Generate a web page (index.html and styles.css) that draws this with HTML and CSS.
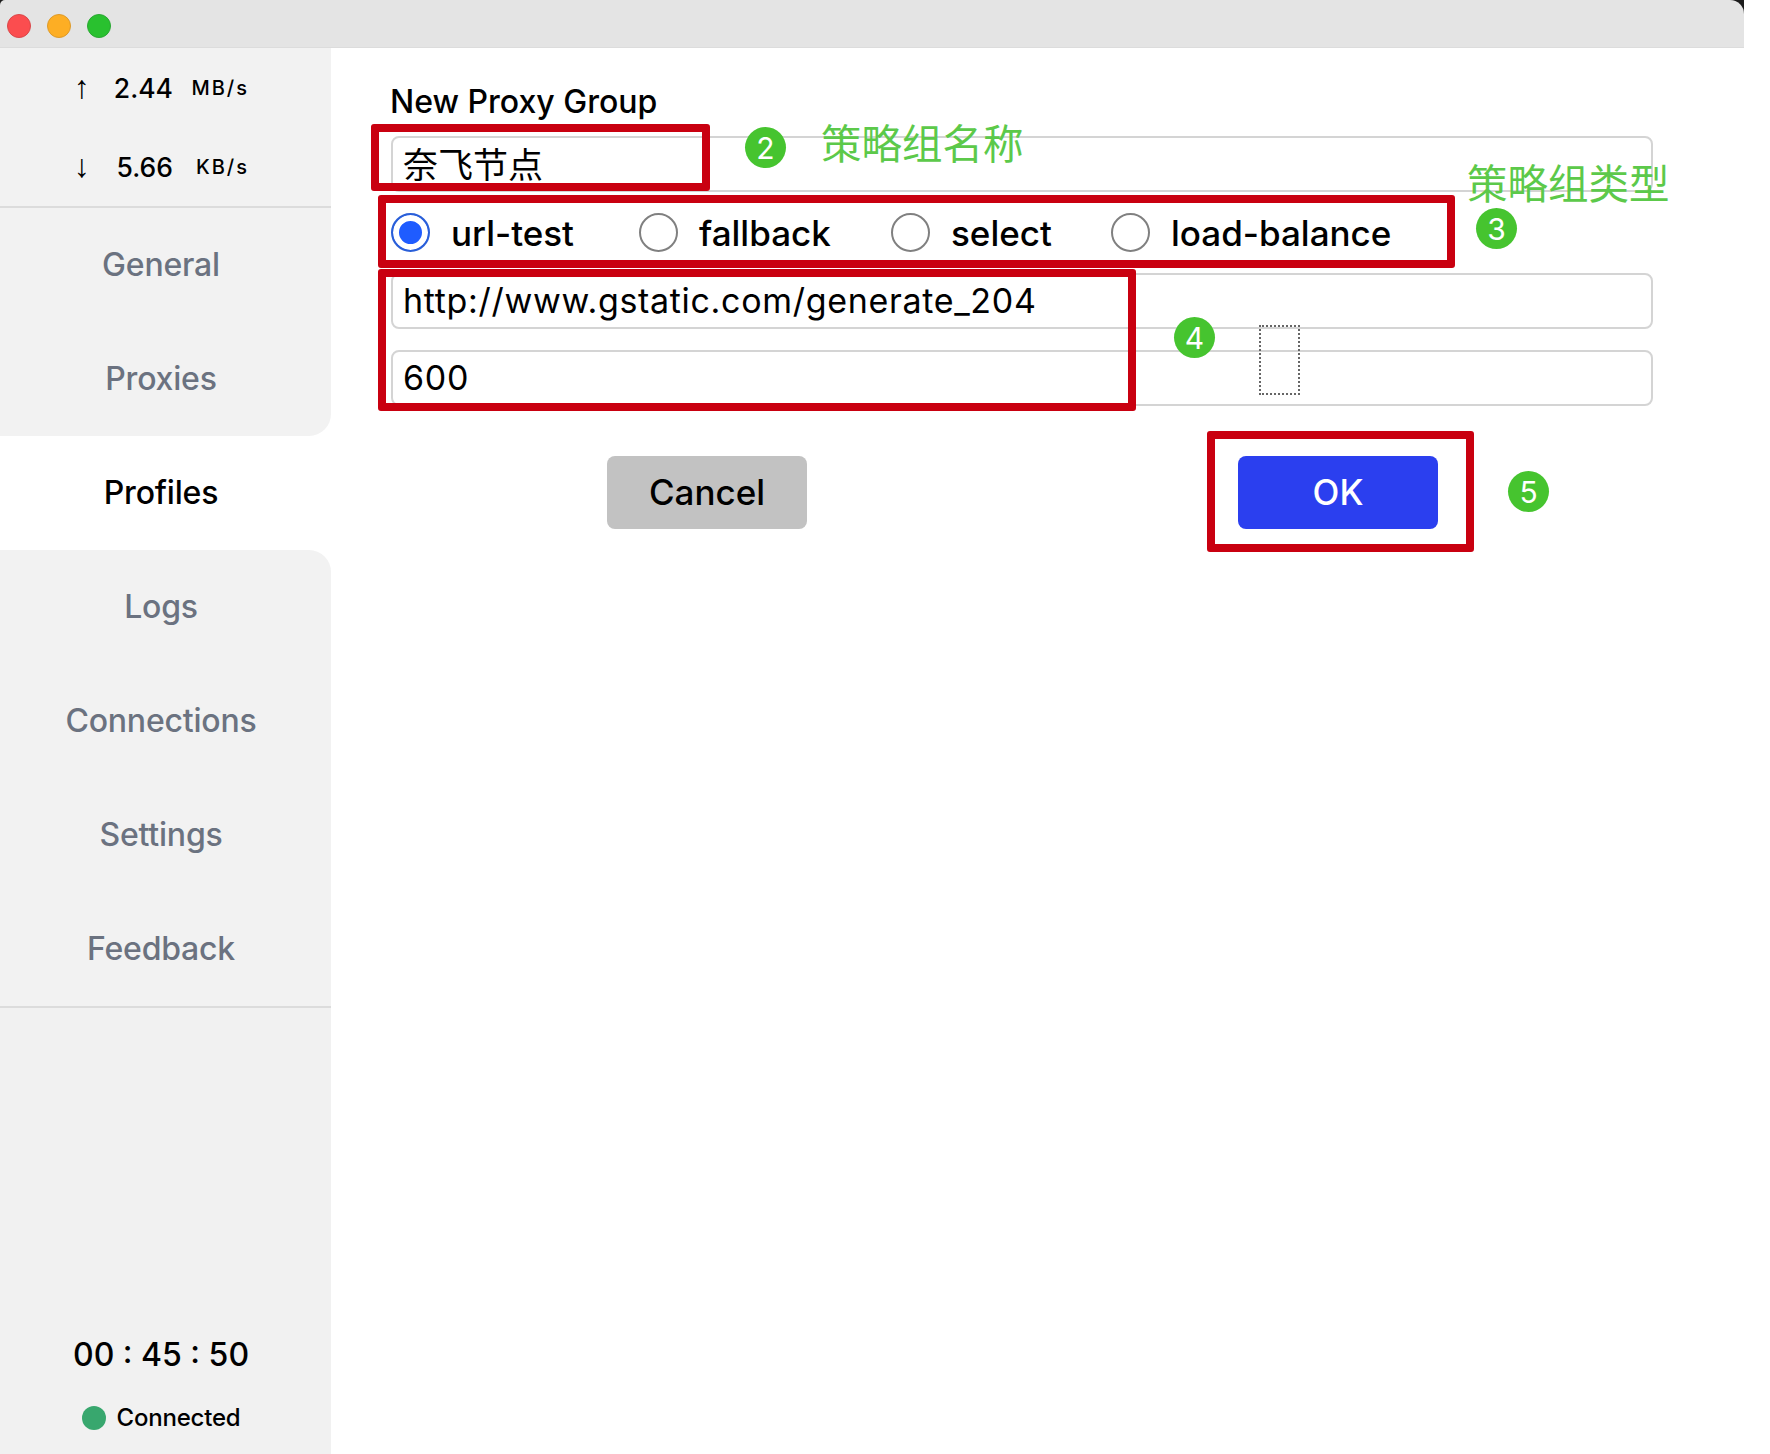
FILE: index.html
```html
<!DOCTYPE html>
<html lang="en">
<head>
<meta charset="utf-8">
<title>New Proxy Group</title>
<link rel="stylesheet" href="styles.css">
</head>
<body>
<div class="window">
  <div class="titlebar-frame">
    <header class="titlebar">
      <span class="light light-red"></span>
      <span class="light light-yellow"></span>
      <span class="light light-green"></span>
    </header>
  </div>
  <div class="content">
    <aside class="sidebar">
      <div class="traffic">
        <div class="speed"><span class="arrow">↑</span><span class="value">2.44</span><span class="unit">MB/s</span></div>
        <div class="speed"><span class="arrow">↓</span><span class="value">5.66</span><span class="unit">KB/s</span></div>
      </div>
      <nav class="nav">
        <div class="nav-item">General</div>
        <div class="nav-item before-active">Proxies</div>
        <div class="nav-item active">Profiles</div>
        <div class="nav-item after-active">Logs</div>
        <div class="nav-item">Connections</div>
        <div class="nav-item">Settings</div>
        <div class="nav-item">Feedback</div>
      </nav>
      <div class="status">
        <div class="timer">00 : 45 : 50</div>
        <div class="connected"><span class="dot"></span>Connected</div>
      </div>
    </aside>
    <main class="main">
      <h1 class="form-title">New Proxy Group</h1>
      <div class="field field-name">奈飞节点</div>
      <div class="radios">
        <label class="radio radio-1"><span class="circle checked"></span>url-test</label>
        <label class="radio radio-2"><span class="circle"></span>fallback</label>
        <label class="radio radio-3"><span class="circle"></span>select</label>
        <label class="radio"><span class="circle"></span>load-balance</label>
      </div>
      <div class="field field-url">http://www.gstatic.com/generate_204</div>
      <div class="field field-interval">600</div>
      <div class="buttons">
        <button class="btn btn-cancel">Cancel</button>
        <button class="btn btn-ok">OK</button>
      </div>
    </main>
  </div>
</div>

<div class="mark mark-name"></div>
<div class="mark mark-type"></div>
<div class="mark mark-url"></div>
<div class="mark mark-ok"></div>
<div class="badge badge-2">2</div>
<div class="badge badge-3">3</div>
<div class="badge badge-4">4</div>
<div class="badge badge-5">5</div>
<div class="note note-name">策略组名称</div>
<div class="note note-type">策略组类型</div>
<div class="dotted"></div>
</body>
</html>
```

FILE: styles.css
```css
* { box-sizing: border-box; }

html, body {
  margin: 0;
  height: 100%;
  background: #fff;
}

body {
  position: relative;
  width: 1770px;
  height: 1454px;
  overflow: hidden;
  font-family: Inter, "Noto Sans CJK SC", sans-serif;
  color: #000;
}

.window {
  display: flex;
  flex-direction: column;
  height: 1454px;
}

.titlebar-frame {
  width: 1744px;
  height: 48px;
  background: #1c1c1c;
}

.titlebar {
  display: flex;
  align-items: center;
  gap: 16px;
  height: 48px;
  padding: 4px 0 0 7px;
  background: #e4e4e4;
  border-bottom: 1px solid #dcdcdc;
  border-top-left-radius: 5px;
  border-top-right-radius: 14px;
}

.light {
  width: 24px;
  height: 24px;
  border-radius: 50%;
  border: 1px solid;
}
.light-red { background: #fb4d4f; border-color: #d9484a; }
.light-yellow { background: #fdae24; border-color: #dd9a2a; }
.light-green { background: #29c12f; border-color: #2aa733; }

.content {
  display: flex;
  flex: 1;
  min-height: 0;
}

.sidebar {
  display: flex;
  flex-direction: column;
  width: 331px;
  background: #fff;
}

.traffic {
  height: 160px;
  background: #f2f2f2;
  border-bottom: 2px solid #dcdcdc;
}

.speed {
  display: flex;
  align-items: center;
  height: 79px;
  padding: 0 62px 0 73px;
  font-weight: 500;
}

.arrow {
  width: 18px;
  margin-right: auto;
  text-align: center;
  font-family: "Liberation Sans", sans-serif;
  font-size: 32px;
  font-weight: 400;
}

.value {
  margin-right: 12px;
  font-size: 26.5px;
}

.unit {
  width: 84px;
  padding-right: 20px;
  text-align: right;
  font-size: 20px;
  letter-spacing: 2px;
}

.nav {
  display: flex;
  flex-direction: column;
  border-bottom: 2px solid #dcdcdc;
}

.nav-item {
  display: flex;
  align-items: center;
  justify-content: center;
  height: 114px;
  padding: 0 9px 2px 0;
  background: #f2f2f2;
  font-size: 32px;
  font-weight: 500;
  letter-spacing: -0.2px;
  color: #6b7280;
}

.before-active { border-bottom-right-radius: 22px; }
.after-active { border-top-right-radius: 22px; }

.nav-item.active {
  background: #fff;
  color: #000;
}

.status {
  flex: 1;
  display: flex;
  flex-direction: column;
  align-items: center;
  justify-content: flex-end;
  padding: 0 9px 22px 0;
  background: #f1f1f1;
}

.timer {
  margin-bottom: 29px;
  font-size: 32px;
  font-weight: 500;
}

.connected {
  display: flex;
  align-items: center;
  gap: 11px;
  font-size: 24px;
  font-weight: 500;
  letter-spacing: -0.2px;
}

.dot {
  width: 24px;
  height: 24px;
  border-radius: 50%;
  background: #38a76e;
}

.main {
  flex: 1;
  display: flex;
  flex-direction: column;
  padding: 34px 117px 0 60px;
}

.form-title {
  margin: 0 0 14px -1px;
  height: 40px;
  line-height: 40px;
  font-size: 32px;
  font-weight: 500;
}

.field {
  display: flex;
  align-items: center;
  height: 56px;
  padding: 0 0 2px 10px;
  border: 2px solid #d4d4d4;
  border-radius: 8px;
  background: #fff;
  font-size: 34px;
  letter-spacing: 0.68px;
}

.field-name {
  padding-bottom: 4px;
  font-size: 35px;
  letter-spacing: 0;
}

.radios {
  display: flex;
  align-items: center;
  height: 81px;
}

.radio {
  display: flex;
  align-items: center;
  gap: 21px;
  font-size: 35px;
  font-weight: 500;
  line-height: 40px;
}
.radio-1 { width: 248px; }
.radio-2 { width: 252px; }
.radio-3 { width: 220px; }

.circle {
  width: 39px;
  height: 39px;
  border: 2px solid #808080;
  border-radius: 50%;
  background: #fff;
}

.circle.checked {
  border-color: #2a5fd8;
  background: #1f5cff;
  box-shadow: inset 0 0 0 6px #fff;
}

.field-url { margin-bottom: 21px; }

.buttons {
  display: flex;
  gap: 431px;
  margin-top: 50px;
  padding-left: 216px;
}

.btn {
  width: 200px;
  height: 73px;
  padding: 0 0 2px;
  border: 0;
  border-radius: 8px;
  font-family: inherit;
  font-size: 35px;
  font-weight: 500;
}
.btn-cancel { background: #c2c2c2; color: #000; }
.btn-ok { background: #2b3fef; color: #fff; }

/* annotations drawn over the screenshot */
.mark {
  position: absolute;
  border: 8px solid #c90010;
  border-radius: 3px;
}
.mark-name { left: 371px; top: 124px; width: 339px; height: 67px; }
.mark-type { left: 378px; top: 195px; width: 1077px; height: 73px; }
.mark-url  { left: 378px; top: 269px; width: 758px; height: 142px; }
.mark-ok   { left: 1207px; top: 431px; width: 267px; height: 121px; }

.badge {
  position: absolute;
  display: flex;
  align-items: center;
  justify-content: center;
  width: 41px;
  height: 41px;
  border-radius: 50%;
  background: #46c42f;
  color: #fff;
  font-size: 30px;
}
.badge-2 { left: 745px; top: 127px; }
.badge-3 { left: 1476px; top: 208px; }
.badge-4 { left: 1174px; top: 317px; }
.badge-5 { left: 1508px; top: 471px; }

.note {
  position: absolute;
  font-family: "Noto Sans CJK SC", sans-serif;
  font-size: 40.5px;
  line-height: 48px;
  color: #5cc94a;
}
.note-name { left: 821px; top: 118px; }
.note-type { left: 1467px; top: 158px; }

.dotted {
  position: absolute;
  left: 1259px;
  top: 325px;
  width: 41px;
  height: 70px;
  border: 2px dotted #666;
}
```
